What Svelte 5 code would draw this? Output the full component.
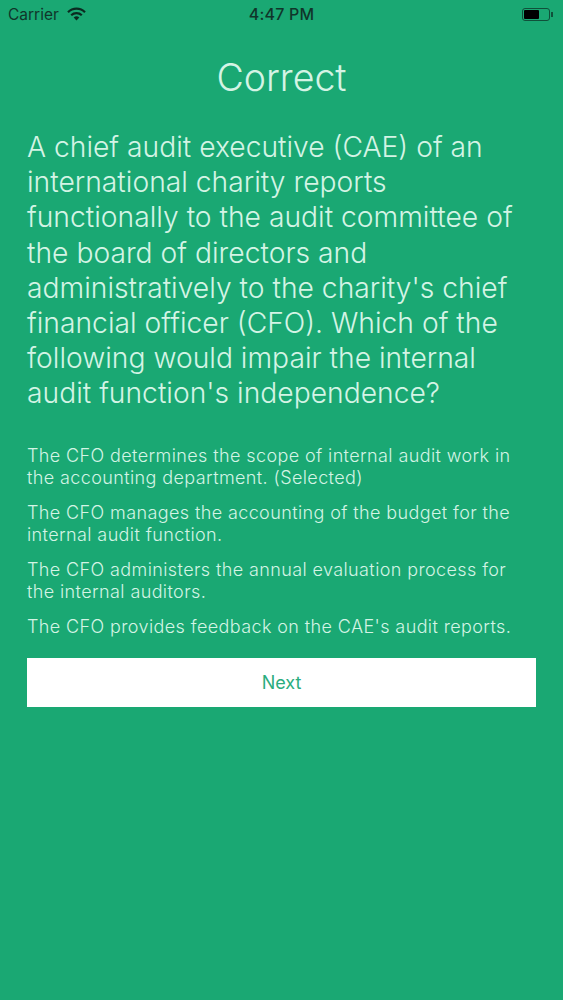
<script lang="ts">
	const answers = [
		'The CFO determines the scope of internal audit work in the accounting department. (Selected)',
		'The CFO manages the accounting of the budget for the internal audit function.',
		'The CFO administers the annual evaluation process for the internal auditors.',
		"The CFO provides feedback on the CAE's audit reports."
	];
</script>

<div class="screen">
	<div class="status">
		<div class="left">
			<span>Carrier</span>
			<svg width="19" height="14" viewBox="0 0 19 14">
				<path d="M1 5.2a12 12 0 0 1 17 0" fill="none" stroke="#0b2a20" stroke-width="2.2" />
				<path d="M4.2 8.2a7.6 7.6 0 0 1 10.6 0" fill="none" stroke="#0b2a20" stroke-width="2.2" />
				<path d="M9.5 13.6 6.7 10.6a4 4 0 0 1 5.6 0z" fill="#0b2a20" />
			</svg>
		</div>
		<div class="time">4:47 PM</div>
		<div class="right">
			<div class="battery"><div class="charge"></div></div>
			<div class="nub"></div>
		</div>
	</div>

	<main>
		<h1>Correct</h1>
		<p class="question">
			A chief audit executive (CAE) of an international charity reports functionally to the audit
			committee of the board of directors and administratively to the charity's chief financial
			officer (CFO). Which of the following would impair the internal audit function's independence?
		</p>
		<div class="answers">
			{#each answers as answer}
				<p>{answer}</p>
			{/each}
		</div>
		<button>Next</button>
	</main>
</div>

<style>
	:global(body) {
		margin: 0;
	}

	.screen {
		height: 1000px;
		background: #1aa873;
		font-family: Inter, 'Noto Sans', sans-serif;
		color: #d4f4e5;
		overflow: hidden;
	}

	.status {
		display: grid;
		grid-template-columns: 1fr auto 1fr;
		align-items: center;
		height: 28px;
		padding: 0 8px;
		color: #10352a;
		font-size: 15.5px;
	}

	.left {
		display: flex;
		align-items: center;
		gap: 8px;
	}

	.time {
		font-size: 16px;
		font-weight: 500;
		letter-spacing: 0.2px;
	}

	.right {
		display: flex;
		align-items: center;
		justify-content: flex-end;
		gap: 1px;
		padding-right: 2px;
	}

	.battery {
		width: 28px;
		height: 13px;
		box-sizing: border-box;
		border: 1px solid #10503a;
		border-radius: 3px;
		padding: 1px;
	}

	.charge {
		width: 15px;
		height: 100%;
		background: #000;
		border-radius: 1px;
	}

	.nub {
		width: 2px;
		height: 5px;
		background: #10503a;
	}

	main {
		padding: 0 27px;
	}

	h1 {
		margin: 26px 0 0;
		font-size: 37.5px;
		font-weight: 300;
		line-height: 48px;
		text-align: center;
	}

	.question {
		margin: 28px 0 0;
		font-size: 28.25px;
		font-weight: 300;
		line-height: 35.2px;
	}

	.answers {
		margin-top: 33px;
		display: flex;
		flex-direction: column;
		gap: 13px;
	}

	.answers p {
		margin: 0;
		font-size: 18px;
		font-weight: 300;
		line-height: 22px;
		letter-spacing: 0.39px;
	}

	button {
		display: block;
		width: 100%;
		height: 49px;
		margin-top: 20px;
		border: 0;
		background: #fff;
		color: #2bad7e;
		font-family: inherit;
		font-size: 18px;
	}
</style>
